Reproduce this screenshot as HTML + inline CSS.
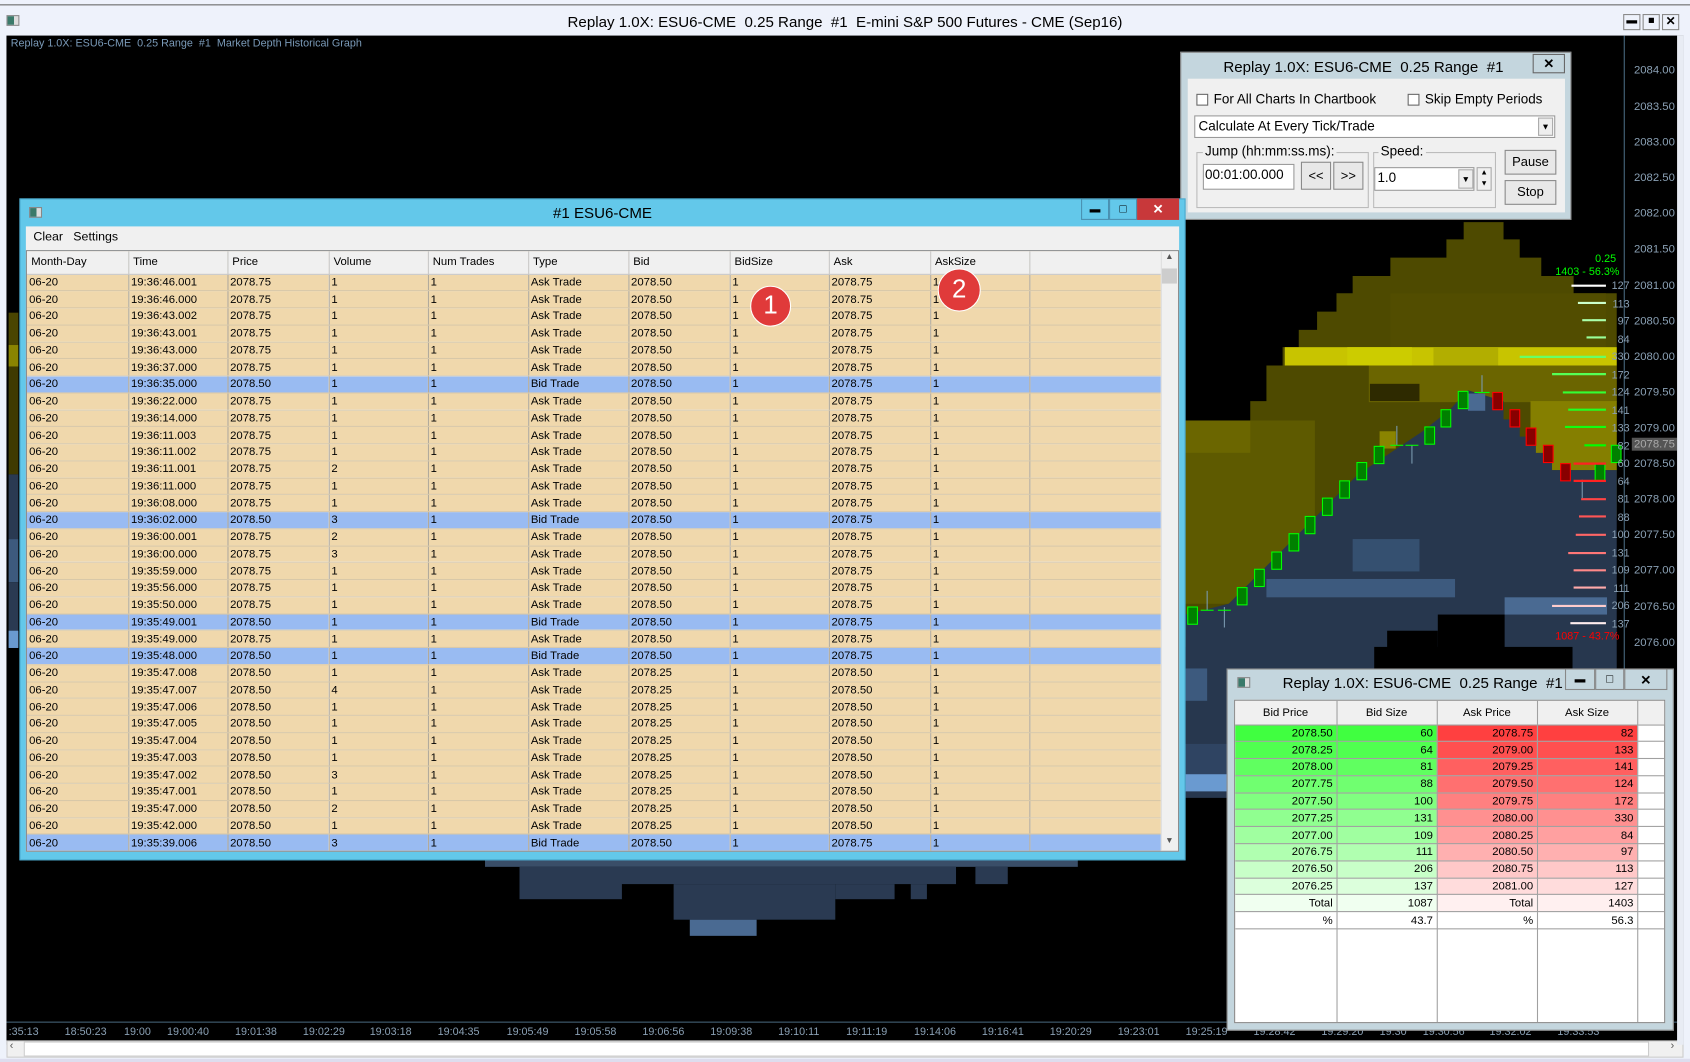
<!DOCTYPE html>
<html><head><meta charset="utf-8">
<style>
*{margin:0;padding:0;box-sizing:border-box}
html,body{width:1690px;height:1062px;overflow:hidden;background:#fff}
#s{position:absolute;left:0;top:0;width:1568px;height:985px;transform:scale(1.07781,1.07817);transform-origin:0 0;font-family:"Liberation Sans",sans-serif;background:#eef2fb}
.a{position:absolute}
.t{font-size:11px;color:#000}
table{border-collapse:collapse;table-layout:fixed}
#trd td{height:15.75px;font-size:10.5px;padding:0 2px;border-right:1px solid #b0a898;border-bottom:1px solid #d8c8a8;white-space:nowrap;overflow:hidden;line-height:14px}
#trd tr{background:#f0d8ac}
#trd tr.b{background:#99bbf2}
#trd th{height:21px;font-weight:normal;font-size:10.5px;text-align:left;padding:0 4px;background:#f0f0f0;border-right:1px solid #c8c8c8;border-bottom:1px solid #c8c8c8}
#dep td{height:15.8px;font-size:10.5px;text-align:right;padding:0 3px;border-right:1px solid #a0a0a0;border-bottom:1px solid #a0a0a0;line-height:14px}
#dep th{height:22px;font-weight:normal;font-size:10.5px;background:#f0f0f0;border-right:1px solid #a0a0a0;border-bottom:1px solid #a0a0a0}
.px{position:absolute;left:1516px;font-size:10.5px;color:#8aa0b4}
.tm{position:absolute;top:952px;font-size:10px;color:#8aa0b4}
.btn{position:absolute;background:#e8e8e8;border:1px solid #8a8a8a;font-size:12px;text-align:center}
.cb{position:absolute;width:11px;height:11px;border:1px solid #666;background:#fff}
</style></head><body><div id="s">

<div class="a" style="left:0;top:4px;width:1568px;height:1px;background:#666"></div>
<div class="a" style="left:6px;top:14px;width:12px;height:10px;border:1px solid #888;background:linear-gradient(90deg,#3a7a6a 60%,#ddd 60%)"></div>
<div class="a" style="left:0;top:12px;width:1568px;text-align:center;font-size:14px;color:#000">Replay 1.0X: ESU6-CME&nbsp; 0.25 Range&nbsp; #1&nbsp; E-mini S&amp;P 500 Futures - CME (Sep16)</div>
<div class="a" style="left:1506px;top:13px;width:16px;height:15px;border:1px solid #888;font-size:10px;text-align:center;line-height:12px">▬</div>
<div class="a" style="left:1524px;top:13px;width:16px;height:15px;border:1px solid #888;font-size:10px;text-align:center;line-height:12px">■</div>
<div class="a" style="left:1542px;top:13px;width:16px;height:15px;border:1px solid #888;font-size:11px;font-weight:bold;text-align:center;line-height:13px">✕</div>

<div class="a" style="left:6px;top:33px;width:1556px;height:936px;background:#000"></div>
<div class="a" style="left:10px;top:35px;font-size:10px;color:#7a9ab8">Replay 1.0X: ESU6-CME&nbsp; 0.25 Range&nbsp; #1&nbsp; Market Depth Historical Graph</div>
<svg class="a" style="left:0;top:0" width="1568" height="985">
<rect x="8" y="290" width="9" height="30" fill="#4a4500"/><rect x="8" y="320" width="9" height="20" fill="#8a8400"/><rect x="8" y="340" width="9" height="100" fill="#3f3a00"/><rect x="8" y="440" width="9" height="60" fill="#2a3a52"/><rect x="8" y="500" width="9" height="40" fill="#3d5a7e"/><rect x="8" y="540" width="9" height="60" fill="#2a3a52"/><rect x="8" y="585" width="9" height="16" fill="#6a9ad0"/>
<polygon fill="#4e4a00" points="1100,390 1160,390 1160,372 1175,372 1175,339 1190,339 1190,322 1205,322 1205,306 1222,306 1222,289 1240,289 1240,272 1255,272 1255,256 1290,256 1290,239 1342,239 1342,222 1358,222 1358,206 1395,206 1395,222 1410,222 1410,239 1430,239 1430,256 1460,256 1460,272 1500,272 1500,480 1100,600"/>
<rect x="1100" y="390" width="120" height="170" fill="#5e5a00"/>
<rect x="1100" y="390" width="60" height="30" fill="#6b6600"/>
<rect x="1290" y="272" width="200" height="50" fill="#524d00"/>
<rect x="1270" y="339" width="230" height="34" fill="#6b6500"/>
<rect x="1420" y="372" width="80" height="64" fill="#857f00"/>
<rect x="1280" y="400" width="15" height="16" fill="#8a8400"/>
<rect x="1271" y="356" width="46" height="16" fill="#2e2a00"/>
<rect x="1192" y="322" width="308" height="17" fill="#c8c400"/>
<rect x="1250" y="322" width="60" height="17" fill="#cccc00"/>
<rect x="1330" y="322" width="60" height="17" fill="#b2ae00"/>
<polygon fill="#27374e" points="1100,590 1100,570 1140,560 1160,540 1180,520 1200,500 1230,470 1260,440 1290,420 1320,400 1345,380 1362,362 1395,372 1395,389 1410,389 1410,405 1425,405 1425,420 1440,420 1440,436 1500,436 1500,620 1138,620 1138,740 1100,740"/>
<rect x="1334" y="570" width="62" height="60" fill="#000"/>
<rect x="1287" y="585" width="47" height="45" fill="#000"/>
<rect x="1275" y="600" width="184" height="30" fill="#000"/>
<rect x="1175" y="537" width="175" height="17" fill="#3d5a7e"/>
<rect x="1255" y="500" width="62" height="30" fill="#355070"/>
<rect x="1396" y="554" width="95" height="16" fill="#4a6a92"/>
<rect x="1362" y="365" width="16" height="16" fill="#4a6a92"/>
<rect x="1100" y="620" width="20" height="30" fill="#3d5a7e"/>
<rect x="1100" y="718" width="38" height="16" fill="#6a9ad0"/>
<rect x="1100" y="690" width="38" height="28" fill="#2f4462"/>
<rect x="450" y="798" width="550" height="6" fill="#3a4e68"/>
<rect x="482" y="804" width="405" height="16" fill="#2a3a52"/>
<rect x="482" y="804" width="95" height="30" fill="#2a3a52"/>
<rect x="625" y="820" width="150" height="33" fill="#2a3a52"/>
<rect x="775" y="820" width="55" height="14" fill="#2a3a52"/>
<rect x="845" y="820" width="15" height="14" fill="#2a3a52"/>
<rect x="640" y="853" width="62" height="15" fill="#4a6a92"/>
<rect x="905" y="804" width="30" height="16" fill="#2a3a52"/>
<g fill="#008000" stroke="#00ff00" stroke-width="1">
<rect x="1102" y="563" width="9" height="16"/><rect x="1148" y="545" width="9" height="16"/><rect x="1164" y="528" width="9" height="16"/><rect x="1180" y="512" width="9" height="16"/><rect x="1196" y="495" width="9" height="16"/><rect x="1211" y="479" width="9" height="16"/><rect x="1227" y="462" width="9" height="16"/><rect x="1243" y="446" width="9" height="16"/><rect x="1259" y="429" width="9" height="16"/><rect x="1275" y="414" width="9" height="16"/><rect x="1322" y="396" width="9" height="16"/><rect x="1337" y="380" width="9" height="16"/><rect x="1353" y="363" width="9" height="16"/><rect x="1480" y="430" width="9" height="16"/><rect x="1495" y="413" width="9" height="16"/>
</g>
<g fill="#880000" stroke="#ff0000" stroke-width="1">
<rect x="1385" y="364" width="9" height="16"/><rect x="1401" y="380" width="9" height="16"/><rect x="1416" y="397" width="9" height="16"/><rect x="1432" y="413" width="9" height="16"/><rect x="1448" y="430" width="9" height="16"/>
</g>
<g stroke="#7a9ab0" stroke-width="1"><line x1="1120" y1="548" x2="1120" y2="566"/><line x1="1136" y1="563" x2="1136" y2="582"/><line x1="1296" y1="395" x2="1296" y2="413"/><line x1="1310" y1="413" x2="1310" y2="430"/><line x1="1375" y1="348" x2="1375" y2="364"/><line x1="1468" y1="445" x2="1468" y2="462"/></g>
<g stroke="#00ff00" stroke-width="1"><line x1="1114" y1="566" x2="1126" y2="566"/><line x1="1130" y1="566" x2="1142" y2="566"/><line x1="1290" y1="413" x2="1302" y2="413"/><line x1="1304" y1="413" x2="1316" y2="413"/><line x1="1368" y1="364" x2="1382" y2="364"/></g>
<g stroke-width="2">
<line x1="1458" y1="265" x2="1490" y2="265" stroke="#ffffff"/>
<line x1="1464" y1="281" x2="1490" y2="281" stroke="#ccffcc"/>
<line x1="1468" y1="297" x2="1490" y2="297" stroke="#aaffaa"/>
<line x1="1472" y1="313" x2="1490" y2="313" stroke="#99ff99"/>
<line x1="1410" y1="331" x2="1490" y2="331" stroke="#66ff66"/>
<line x1="1440" y1="347" x2="1490" y2="347" stroke="#55ff55"/>
<line x1="1450" y1="364" x2="1490" y2="364" stroke="#33ff33"/>
<line x1="1455" y1="380" x2="1490" y2="380" stroke="#22ff22"/>
<line x1="1452" y1="396" x2="1490" y2="396" stroke="#11ff11"/>
<line x1="1470" y1="413" x2="1490" y2="413" stroke="#00ff00"/>
<line x1="1460" y1="430" x2="1490" y2="430" stroke="#ff2222"/>
<line x1="1460" y1="446" x2="1490" y2="446" stroke="#ff2222"/>
<line x1="1467" y1="463" x2="1490" y2="463" stroke="#ff4444"/>
<line x1="1465" y1="479" x2="1490" y2="479" stroke="#ff5555"/>
<line x1="1462" y1="496" x2="1490" y2="496" stroke="#ff6666"/>
<line x1="1455" y1="513" x2="1490" y2="513" stroke="#ff7777"/>
<line x1="1460" y1="529" x2="1490" y2="529" stroke="#ff8888"/>
<line x1="1460" y1="545" x2="1490" y2="545" stroke="#ffaaaa"/>
<line x1="1440" y1="562" x2="1490" y2="562" stroke="#ffcccc"/>
<line x1="1457" y1="578" x2="1490" y2="578" stroke="#ffeeee"/>
</g>
<line x1="1507" y1="33" x2="1507" y2="948" stroke="#4a6a80"/>
<line x1="6" y1="948" x2="1560" y2="948" stroke="#4a6a80"/>
</svg>
<div class="a" style="left:1494px;top:258px;font-size:10px;color:#8aa0b4;line-height:16.5px;text-align:right;width:18px">127<br>113<br>97<br>84<br>330<br>172<br>124<br>141<br>133<br>82<br>60<br>64<br>81<br>88<br>100<br>131<br>109<br>111<br>206<br>137</div>
<div class="a" style="left:1480px;top:235px;font-size:10px;color:#00ff00">0.25</div>
<div class="a" style="left:1443px;top:247px;font-size:10px;color:#00ff00">1403 - 56.3%</div>
<div class="a" style="left:1443px;top:585px;font-size:10px;color:#ff0000">1087 - 43.7%</div>
<div class="px" style="top:59px">2084.00</div><div class="px" style="top:93px">2083.50</div><div class="px" style="top:126px">2083.00</div><div class="px" style="top:159px">2082.50</div><div class="px" style="top:192px">2082.00</div><div class="px" style="top:225px">2081.50</div><div class="px" style="top:259px">2081.00</div><div class="px" style="top:292px">2080.50</div><div class="px" style="top:325px">2080.00</div><div class="px" style="top:358px">2079.50</div><div class="px" style="top:391px">2079.00</div>
<div class="px" style="top:406px;left:1514px;background:#555;color:#aaa;padding:0 2px">2078.75</div>
<div class="px" style="top:424px">2078.50</div><div class="px" style="top:457px">2078.00</div><div class="px" style="top:490px">2077.50</div><div class="px" style="top:523px">2077.00</div><div class="px" style="top:557px">2076.50</div><div class="px" style="top:590px">2076.00</div>

<div class="tm" style="left:8px">:35:13</div><div class="tm" style="left:60px">18:50:23</div><div class="tm" style="left:115px">19:00</div><div class="tm" style="left:155px">19:00:40</div><div class="tm" style="left:218px">19:01:38</div><div class="tm" style="left:281px">19:02:29</div><div class="tm" style="left:343px">19:03:18</div><div class="tm" style="left:406px">19:04:35</div><div class="tm" style="left:470px">19:05:49</div><div class="tm" style="left:533px">19:05:58</div><div class="tm" style="left:596px">19:06:56</div><div class="tm" style="left:659px">19:09:38</div><div class="tm" style="left:722px">19:10:11</div><div class="tm" style="left:785px">19:11:19</div><div class="tm" style="left:848px">19:14:06</div><div class="tm" style="left:911px">19:16:41</div><div class="tm" style="left:974px">19:20:29</div><div class="tm" style="left:1037px">19:23:01</div><div class="tm" style="left:1100px">19:25:19</div><div class="tm" style="left:1163px">19:28:42</div><div class="tm" style="left:1226px">19:29:20</div><div class="tm" style="left:1280px">19:30</div><div class="tm" style="left:1320px">19:30:56</div><div class="tm" style="left:1382px">19:32:02</div><div class="tm" style="left:1445px">19:33:53</div>
<div class="a" style="left:6px;top:965px;width:1556px;height:16px;background:#f0f0f0;border:1px solid #ccc"></div>
<div class="a" style="left:22px;top:966px;width:1508px;height:14px;background:#fff;border:1px solid #ccc"></div>
<div class="a" style="left:9px;top:965px;font-size:10px;color:#555">‹</div><div class="a" style="left:1550px;top:965px;font-size:10px;color:#555">›</div>
<div class="a" style="left:0;top:982px;width:1568px;height:3px;background:#dde"></div>

<div class="a" style="left:1095px;top:48px;width:363px;height:156px;background:#c4d6de;border:1px solid #888"></div>
<div class="a" style="left:1095px;top:54px;width:340px;text-align:center;font-size:14px">Replay 1.0X: ESU6-CME&nbsp; 0.25 Range&nbsp; #1</div>
<div class="a" style="left:1422px;top:50px;width:30px;height:18px;border:1px solid #666;font-size:12px;font-weight:bold;text-align:center;line-height:16px">✕</div>
<div class="a" style="left:1102px;top:73px;width:350px;height:124px;background:#f0f0f0"></div>
<div class="cb" style="left:1110px;top:87px"></div><div class="a" style="left:1126px;top:85px;font-size:12.5px">For All Charts In Chartbook</div>
<div class="cb" style="left:1306px;top:87px"></div><div class="a" style="left:1322px;top:85px;font-size:12.5px">Skip Empty Periods</div>
<div class="a" style="left:1108px;top:107px;width:335px;height:21px;background:#fff;border:1px solid #999;font-size:12.5px;padding:2px 3px">Calculate At Every Tick/Trade</div>
<div class="a" style="left:1427px;top:109px;width:14px;height:17px;background:#eee;border:1px solid #aaa;font-size:8px;text-align:center;line-height:16px">▼</div>
<div class="a" style="left:1110px;top:141px;width:160px;height:52px;border:1px solid #bbb"></div>
<div class="a" style="left:1116px;top:133px;background:#f0f0f0;font-size:12.5px;padding:0 2px">Jump (hh:mm:ss.ms):</div>
<div class="a" style="left:1116px;top:152px;width:85px;height:24px;background:#fff;border:1px solid #999;font-size:12.5px;padding:2px 1px">00:01:00.000</div>
<div class="btn" style="left:1207px;top:150px;width:28px;height:26px;line-height:24px">&lt;&lt;</div>
<div class="btn" style="left:1237px;top:150px;width:28px;height:26px;line-height:24px">&gt;&gt;</div>
<div class="a" style="left:1274px;top:141px;width:114px;height:52px;border:1px solid #bbb"></div>
<div class="a" style="left:1279px;top:133px;background:#f0f0f0;font-size:12.5px;padding:0 2px">Speed:</div>
<div class="a" style="left:1275px;top:155px;width:93px;height:22px;background:#fff;border:1px solid #999;font-size:12.5px;padding:2px 2px">1.0</div>
<div class="a" style="left:1353px;top:157px;width:14px;height:18px;background:#eee;border:1px solid #aaa;font-size:8px;text-align:center;line-height:17px">▼</div>
<div class="a" style="left:1370px;top:155px;width:14px;height:22px;border:1px solid #aaa;font-size:7px;text-align:center;line-height:10px">▲<br>▼</div>
<div class="btn" style="left:1396px;top:139px;width:48px;height:23px;line-height:21px">Pause</div>
<div class="btn" style="left:1396px;top:167px;width:48px;height:23px;line-height:21px">Stop</div>

<div class="a" style="left:18px;top:184px;width:1082px;height:614px;background:#63c8ea;border:1px solid #4aa8cc"></div>
<div class="a" style="left:27px;top:192px;width:12px;height:10px;border:1px solid #888;background:linear-gradient(90deg,#3a7a6a 60%,#ddd 60%)"></div>
<div class="a" style="left:18px;top:189px;width:1082px;text-align:center;font-size:14px">#1 ESU6-CME</div>
<div class="a" style="left:1003px;top:184px;width:26px;height:20px;border:1px solid #4a90b0;font-size:10px;text-align:center;line-height:20px">▬</div>
<div class="a" style="left:1029px;top:184px;width:26px;height:20px;border:1px solid #4a90b0;font-size:11px;text-align:center;line-height:18px">□</div>
<div class="a" style="left:1055px;top:184px;width:39px;height:20px;background:#c8383a;color:#fff;font-size:12px;font-weight:bold;text-align:center;line-height:20px">✕</div>
<div class="a" style="left:24px;top:210px;width:1070px;height:22px;background:#f0f0f0"></div>
<div class="a" style="left:31px;top:214px;font-size:11.5px">Clear</div><div class="a" style="left:68px;top:214px;font-size:11.5px">Settings</div>
<div class="a" style="left:24px;top:232px;width:1070px;height:558px;background:#fff;border:1px solid #888;overflow:hidden">
<table id="trd" style="width:1053px">
<colgroup><col style="width:94px"><col style="width:92px"><col style="width:94px"><col style="width:92px"><col style="width:93px"><col style="width:93px"><col style="width:94px"><col style="width:92px"><col style="width:94px"><col style="width:92px"><col style="width:123px"></colgroup>
<tr><th>Month-Day</th><th>Time</th><th>Price</th><th>Volume</th><th>Num Trades</th><th>Type</th><th>Bid</th><th>BidSize</th><th>Ask</th><th>AskSize</th><th></th></tr>
<tr><td>06-20</td><td>19:36:46.001</td><td>2078.75</td><td>1</td><td>1</td><td>Ask Trade</td><td>2078.50</td><td>1</td><td>2078.75</td><td>1</td><td></td></tr>
<tr><td>06-20</td><td>19:36:46.000</td><td>2078.75</td><td>1</td><td>1</td><td>Ask Trade</td><td>2078.50</td><td>1</td><td>2078.75</td><td>1</td><td></td></tr>
<tr><td>06-20</td><td>19:36:43.002</td><td>2078.75</td><td>1</td><td>1</td><td>Ask Trade</td><td>2078.50</td><td>1</td><td>2078.75</td><td>1</td><td></td></tr>
<tr><td>06-20</td><td>19:36:43.001</td><td>2078.75</td><td>1</td><td>1</td><td>Ask Trade</td><td>2078.50</td><td>1</td><td>2078.75</td><td>1</td><td></td></tr>
<tr><td>06-20</td><td>19:36:43.000</td><td>2078.75</td><td>1</td><td>1</td><td>Ask Trade</td><td>2078.50</td><td>1</td><td>2078.75</td><td>1</td><td></td></tr>
<tr><td>06-20</td><td>19:36:37.000</td><td>2078.75</td><td>1</td><td>1</td><td>Ask Trade</td><td>2078.50</td><td>1</td><td>2078.75</td><td>1</td><td></td></tr>
<tr class="b"><td>06-20</td><td>19:36:35.000</td><td>2078.50</td><td>1</td><td>1</td><td>Bid Trade</td><td>2078.50</td><td>1</td><td>2078.75</td><td>1</td><td></td></tr>
<tr><td>06-20</td><td>19:36:22.000</td><td>2078.75</td><td>1</td><td>1</td><td>Ask Trade</td><td>2078.50</td><td>1</td><td>2078.75</td><td>1</td><td></td></tr>
<tr><td>06-20</td><td>19:36:14.000</td><td>2078.75</td><td>1</td><td>1</td><td>Ask Trade</td><td>2078.50</td><td>1</td><td>2078.75</td><td>1</td><td></td></tr>
<tr><td>06-20</td><td>19:36:11.003</td><td>2078.75</td><td>1</td><td>1</td><td>Ask Trade</td><td>2078.50</td><td>1</td><td>2078.75</td><td>1</td><td></td></tr>
<tr><td>06-20</td><td>19:36:11.002</td><td>2078.75</td><td>1</td><td>1</td><td>Ask Trade</td><td>2078.50</td><td>1</td><td>2078.75</td><td>1</td><td></td></tr>
<tr><td>06-20</td><td>19:36:11.001</td><td>2078.75</td><td>2</td><td>1</td><td>Ask Trade</td><td>2078.50</td><td>1</td><td>2078.75</td><td>1</td><td></td></tr>
<tr><td>06-20</td><td>19:36:11.000</td><td>2078.75</td><td>1</td><td>1</td><td>Ask Trade</td><td>2078.50</td><td>1</td><td>2078.75</td><td>1</td><td></td></tr>
<tr><td>06-20</td><td>19:36:08.000</td><td>2078.75</td><td>1</td><td>1</td><td>Ask Trade</td><td>2078.50</td><td>1</td><td>2078.75</td><td>1</td><td></td></tr>
<tr class="b"><td>06-20</td><td>19:36:02.000</td><td>2078.50</td><td>3</td><td>1</td><td>Bid Trade</td><td>2078.50</td><td>1</td><td>2078.75</td><td>1</td><td></td></tr>
<tr><td>06-20</td><td>19:36:00.001</td><td>2078.75</td><td>2</td><td>1</td><td>Ask Trade</td><td>2078.50</td><td>1</td><td>2078.75</td><td>1</td><td></td></tr>
<tr><td>06-20</td><td>19:36:00.000</td><td>2078.75</td><td>3</td><td>1</td><td>Ask Trade</td><td>2078.50</td><td>1</td><td>2078.75</td><td>1</td><td></td></tr>
<tr><td>06-20</td><td>19:35:59.000</td><td>2078.75</td><td>1</td><td>1</td><td>Ask Trade</td><td>2078.50</td><td>1</td><td>2078.75</td><td>1</td><td></td></tr>
<tr><td>06-20</td><td>19:35:56.000</td><td>2078.75</td><td>1</td><td>1</td><td>Ask Trade</td><td>2078.50</td><td>1</td><td>2078.75</td><td>1</td><td></td></tr>
<tr><td>06-20</td><td>19:35:50.000</td><td>2078.75</td><td>1</td><td>1</td><td>Ask Trade</td><td>2078.50</td><td>1</td><td>2078.75</td><td>1</td><td></td></tr>
<tr class="b"><td>06-20</td><td>19:35:49.001</td><td>2078.50</td><td>1</td><td>1</td><td>Bid Trade</td><td>2078.50</td><td>1</td><td>2078.75</td><td>1</td><td></td></tr>
<tr><td>06-20</td><td>19:35:49.000</td><td>2078.75</td><td>1</td><td>1</td><td>Ask Trade</td><td>2078.50</td><td>1</td><td>2078.75</td><td>1</td><td></td></tr>
<tr class="b"><td>06-20</td><td>19:35:48.000</td><td>2078.50</td><td>1</td><td>1</td><td>Bid Trade</td><td>2078.50</td><td>1</td><td>2078.75</td><td>1</td><td></td></tr>
<tr><td>06-20</td><td>19:35:47.008</td><td>2078.50</td><td>1</td><td>1</td><td>Ask Trade</td><td>2078.25</td><td>1</td><td>2078.50</td><td>1</td><td></td></tr>
<tr><td>06-20</td><td>19:35:47.007</td><td>2078.50</td><td>4</td><td>1</td><td>Ask Trade</td><td>2078.25</td><td>1</td><td>2078.50</td><td>1</td><td></td></tr>
<tr><td>06-20</td><td>19:35:47.006</td><td>2078.50</td><td>1</td><td>1</td><td>Ask Trade</td><td>2078.25</td><td>1</td><td>2078.50</td><td>1</td><td></td></tr>
<tr><td>06-20</td><td>19:35:47.005</td><td>2078.50</td><td>1</td><td>1</td><td>Ask Trade</td><td>2078.25</td><td>1</td><td>2078.50</td><td>1</td><td></td></tr>
<tr><td>06-20</td><td>19:35:47.004</td><td>2078.50</td><td>1</td><td>1</td><td>Ask Trade</td><td>2078.25</td><td>1</td><td>2078.50</td><td>1</td><td></td></tr>
<tr><td>06-20</td><td>19:35:47.003</td><td>2078.50</td><td>1</td><td>1</td><td>Ask Trade</td><td>2078.25</td><td>1</td><td>2078.50</td><td>1</td><td></td></tr>
<tr><td>06-20</td><td>19:35:47.002</td><td>2078.50</td><td>3</td><td>1</td><td>Ask Trade</td><td>2078.25</td><td>1</td><td>2078.50</td><td>1</td><td></td></tr>
<tr><td>06-20</td><td>19:35:47.001</td><td>2078.50</td><td>1</td><td>1</td><td>Ask Trade</td><td>2078.25</td><td>1</td><td>2078.50</td><td>1</td><td></td></tr>
<tr><td>06-20</td><td>19:35:47.000</td><td>2078.50</td><td>2</td><td>1</td><td>Ask Trade</td><td>2078.25</td><td>1</td><td>2078.50</td><td>1</td><td></td></tr>
<tr><td>06-20</td><td>19:35:42.000</td><td>2078.50</td><td>1</td><td>1</td><td>Ask Trade</td><td>2078.25</td><td>1</td><td>2078.50</td><td>1</td><td></td></tr>
<tr class="b"><td>06-20</td><td>19:35:39.006</td><td>2078.50</td><td>3</td><td>1</td><td>Bid Trade</td><td>2078.50</td><td>1</td><td>2078.75</td><td>1</td><td></td></tr>
</table>
<div class="a" style="left:1052px;top:0;width:16px;height:557px;background:#f0f0f0;border-left:1px solid #ddd"></div>
<div class="a" style="left:1052px;top:0;width:16px;height:15px;font-size:8px;text-align:center;color:#555">▲</div>
<div class="a" style="left:1053px;top:16px;width:14px;height:14px;background:#cdcdcd"></div>
<div class="a" style="left:1052px;top:542px;width:16px;height:15px;font-size:8px;text-align:center;color:#555">▼</div>
</div>
<div class="a" style="left:696px;top:265px;width:38px;height:38px;border-radius:50%;background:#e03a3a;border:1px solid #fff;color:#fff;font-size:24px;text-align:center;line-height:36px">1</div>
<div class="a" style="left:870px;top:249px;width:40px;height:40px;border-radius:50%;background:#e03a3a;border:1px solid #fff;color:#fff;font-size:24px;text-align:center;line-height:38px">2</div>

<div class="a" style="left:1138px;top:620px;width:415px;height:336px;background:#c4d6de;border:1px solid #888"></div>
<div class="a" style="left:1148px;top:628px;width:12px;height:10px;border:1px solid #888;background:linear-gradient(90deg,#3a7a6a 60%,#ddd 60%)"></div>
<div class="a" style="left:1190px;top:625px;font-size:14px">Replay 1.0X: ESU6-CME&nbsp; 0.25 Range&nbsp; #1</div>
<div class="a" style="left:1452px;top:620px;width:28px;height:20px;border:1px solid #888;font-size:10px;text-align:center;line-height:20px">▬</div>
<div class="a" style="left:1480px;top:620px;width:27px;height:20px;border:1px solid #888;font-size:11px;text-align:center;line-height:18px">□</div>
<div class="a" style="left:1507px;top:620px;width:40px;height:20px;border:1px solid #888;font-size:12px;font-weight:bold;text-align:center;line-height:20px">✕</div>
<div class="a" style="left:1145px;top:649px;width:400px;height:300px;background:#fff;border:1px solid #888;overflow:hidden">
<table id="dep" style="width:401px">
<colgroup><col style="width:94px"><col style="width:93px"><col style="width:93px"><col style="width:93px"><col style="width:28px"></colgroup>
<tr><th>Bid Price</th><th>Bid Size</th><th>Ask Price</th><th>Ask Size</th><th></th></tr>
<tr><td style="background:#40ff40">2078.50</td><td style="background:#40ff40">60</td><td style="background:#ff4040">2078.75</td><td style="background:#ff4040">82</td><td></td></tr>
<tr><td style="background:#50ff50">2078.25</td><td style="background:#50ff50">64</td><td style="background:#ff5050">2079.00</td><td style="background:#ff5050">133</td><td></td></tr>
<tr><td style="background:#60ff60">2078.00</td><td style="background:#60ff60">81</td><td style="background:#ff6060">2079.25</td><td style="background:#ff6060">141</td><td></td></tr>
<tr><td style="background:#70ff70">2077.75</td><td style="background:#70ff70">88</td><td style="background:#ff7070">2079.50</td><td style="background:#ff7070">124</td><td></td></tr>
<tr><td style="background:#80ff80">2077.50</td><td style="background:#80ff80">100</td><td style="background:#ff8080">2079.75</td><td style="background:#ff8080">172</td><td></td></tr>
<tr><td style="background:#90ff90">2077.25</td><td style="background:#90ff90">131</td><td style="background:#ff9090">2080.00</td><td style="background:#ff9090">330</td><td></td></tr>
<tr><td style="background:#a0ffa0">2077.00</td><td style="background:#a0ffa0">109</td><td style="background:#ffa0a0">2080.25</td><td style="background:#ffa0a0">84</td><td></td></tr>
<tr><td style="background:#b0ffb0">2076.75</td><td style="background:#b0ffb0">111</td><td style="background:#ffb0b0">2080.50</td><td style="background:#ffb0b0">97</td><td></td></tr>
<tr><td style="background:#c8ffc8">2076.50</td><td style="background:#c8ffc8">206</td><td style="background:#ffc8c8">2080.75</td><td style="background:#ffc8c8">113</td><td></td></tr>
<tr><td style="background:#dcffdc">2076.25</td><td style="background:#dcffdc">137</td><td style="background:#ffdcdc">2081.00</td><td style="background:#ffdcdc">127</td><td></td></tr>
<tr><td style="background:#f0fff0">Total</td><td style="background:#f0fff0">1087</td><td style="background:#fff0f0">Total</td><td style="background:#fff0f0">1403</td><td></td></tr>
<tr><td>%</td><td>43.7</td><td>%</td><td>56.3</td><td></td></tr>
<tr><td style="height:92px"></td><td></td><td></td><td></td><td></td></tr>
</table>
</div>
<div class="a" style="left:1556px;top:33px;width:6px;height:936px;background:#e8ecf4"></div>
</div></body></html>
